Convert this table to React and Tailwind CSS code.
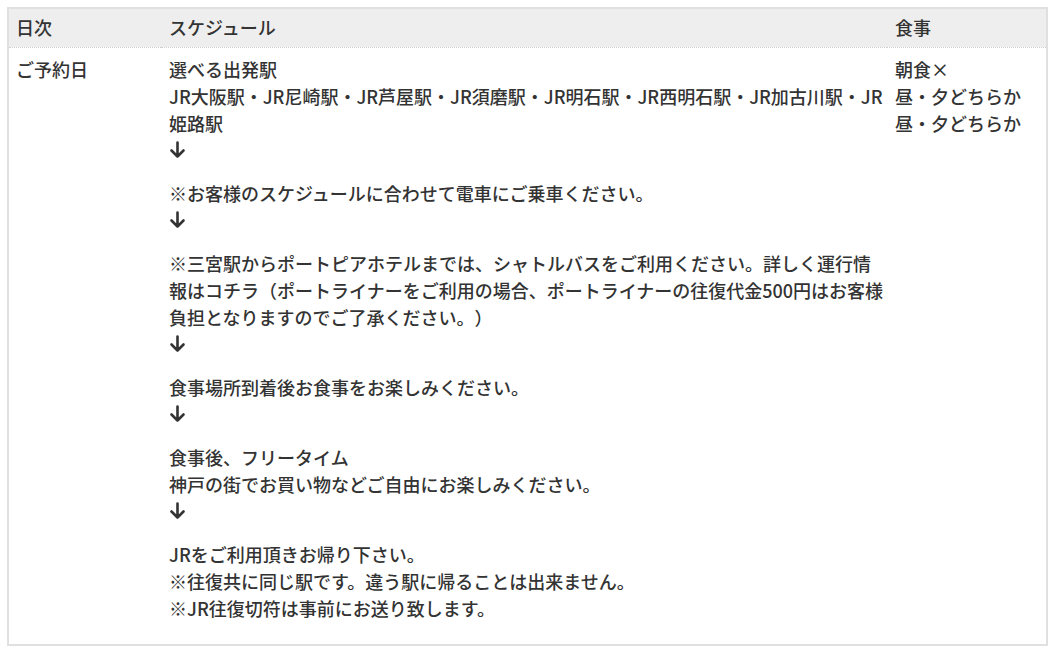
function DownArrow() {
  return (
    <svg width="18" height="27" viewBox="0 0 18 27" className="block" aria-hidden="true">
      <path d="M8.5 5.5v14M2.5 13.5l6 6 6-6" fill="none" stroke="#333" strokeWidth="2.6" strokeLinecap="round" strokeLinejoin="round" />
    </svg>
  );
}

export default function App() {
  const schedule = [
    ['選べる出発駅', 'JR大阪駅・JR尼崎駅・JR芦屋駅・JR須磨駅・JR明石駅・JR西明石駅・JR加古川駅・JR姫路駅'],
    ['※お客様のスケジュールに合わせて電車にご乗車ください。'],
    ['※三宮駅からポートピアホテルまでは、シャトルバスをご利用ください。詳しく運行情報はコチラ（ポートライナーをご利用の場合、ポートライナーの往復代金500円はお客様負担となりますのでご了承ください。）'],
    ['食事場所到着後お食事をお楽しみください。'],
    ['食事後、フリータイム', '神戸の街でお買い物などご自由にお楽しみください。'],
  ];

  return (
    <div
      className="bg-white p-[7px] text-[#333] text-[18px] leading-[27px] font-medium [text-spacing-trim:space-all]"
      style={{ fontFamily: '"Noto Sans CJK JP", "Noto Sans", sans-serif' }}
    >
      <table className="w-full table-fixed border-collapse border-2 border-[#e0e0e0]">
        <thead>
          <tr className="bg-[#eeeeee] border-b border-dotted border-[#cfcfcf]">
            <th className="w-[153px] h-[39px] px-[7px] text-left font-medium">日次</th>
            <th className="w-[726px] h-[39px] pl-[8px] pr-0 text-left font-medium">スケジュール</th>
            <th className="h-[39px] px-[8px] text-left font-medium">食事</th>
          </tr>
        </thead>
        <tbody>
          <tr className="align-top">
            <td className="px-[7px] pt-[8px] pb-[8px]">ご予約日</td>
            <td className="pl-[8px] pr-0 pt-[8px] pb-[8px]">
              {schedule.map((lines, i) => (
                <p key={i} className="mb-[16px]">
                  {lines.map((line, j) => (
                    <span key={j} className="block">{line}</span>
                  ))}
                  <DownArrow />
                </p>
              ))}
              <p className="mb-[14px]">
                <span className="block">JRをご利用頂きお帰り下さい。</span>
                <span className="block">※往復共に同じ駅です。違う駅に帰ることは出来ません。</span>
                <span className="block">※JR往復切符は事前にお送り致します。</span>
              </p>
            </td>
            <td className="px-[8px] pt-[8px] pb-[8px]">
              <span className="block">朝食×</span>
              <span className="block">昼・夕どちらか</span>
              <span className="block">昼・夕どちらか</span>
            </td>
          </tr>
        </tbody>
      </table>
    </div>
  );
}
